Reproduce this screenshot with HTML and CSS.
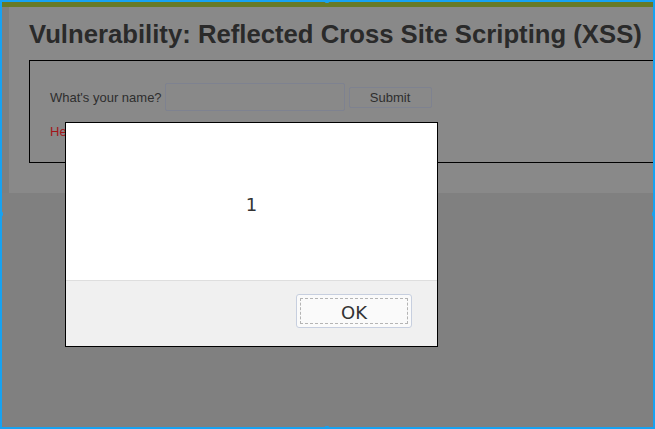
FILE: index.html
```html
<!DOCTYPE html>
<html>
<head>
<meta charset="utf-8">
<link rel="stylesheet" href="styles.css">
</head>
<body>
<div class="frame">
  <div class="topbar"></div>
  <div class="row">
    <div class="strip"></div>
    <div class="panel">
      <h1 class="title">Vulnerability: Reflected Cross Site Scripting (XSS)</h1>
      <div class="box">
        <form class="form">
          <span class="label">What's your name?</span>
          <span class="input"></span>
          <span class="submit">Submit</span>
        </form>
        <div class="hello">Hello</div>
      </div>
    </div>
  </div>
  <div class="dialog">
    <div class="dialog-body">1</div>
    <div class="dialog-foot">
      <div class="ok"><span class="ok-inner">OK</span></div>
    </div>
  </div>
  <span class="handle h-top"></span>
  <span class="handle h-left"></span>
  <span class="handle h-right"></span>
  <span class="handle h-bottom"></span>
</div>
</body>
</html>
```

FILE: styles.css
```css
html, body {
  margin: 0;
  padding: 0;
}
body {
  width: 655px;
  height: 429px;
  overflow: hidden;
  background: #808080;
}
.frame {
  position: relative;
  width: 655px;
  height: 429px;
  box-sizing: border-box;
  border: 2px solid #17a2f2;
  background: #808080;
  overflow: hidden;
}
.topbar {
  height: 5px;
  background: #687a26;
}
.row {
  display: flex;
}
.strip {
  width: 7px;
  background: #7f7f7f;
}
.panel {
  flex: 1;
  height: 186px;
  background: #898989;
  padding-left: 20px;
  overflow: hidden;
}
.title {
  margin: 12px 0 0 0;
  font-family: "Liberation Sans", Arial, sans-serif;
  font-weight: bold;
  font-size: 25.7px;
  line-height: 30px;
  color: #2a2a2a;
  white-space: nowrap;
}
.box {
  margin-top: 11px;
  border: 1px solid #000;
  border-right: none;
  height: 101px;
  box-sizing: content-box;
  padding: 0 0 0 20px;
  font-family: "Liberation Sans", Arial, sans-serif;
  font-size: 13px;
}
.form {
  display: flex;
  align-items: center;
  margin: 22px 0 0 0;
}
.label {
  color: #2e2e2e;
  margin-right: 3px;
}
.input {
  width: 178px;
  height: 26px;
  border: 1px solid #7e8290;
  border-radius: 2px;
  margin-right: 4px;
}
.submit {
  width: 81px;
  height: 19px;
  border: 1px solid #7e8290;
  border-radius: 2px;
  display: flex;
  align-items: center;
  justify-content: center;
  color: #2e2e2e;
}
.hello {
  margin-top: 13px;
  color: #a2161b;
  line-height: 15px;
}
.dialog {
  position: absolute;
  left: 63px;
  top: 120px;
  width: 371px;
  height: 223px;
  border: 1px solid #000;
  display: flex;
  flex-direction: column;
  font-family: "DejaVu Sans", sans-serif;
}
.dialog-body {
  height: 158px;
  background: #fff;
  border-bottom: 1px solid #dedede;
  display: flex;
  align-items: center;
  justify-content: center;
  font-size: 18px;
  color: #333;
  padding-top: 5px;
  box-sizing: border-box;
}
.dialog-foot {
  flex: 1;
  background: #f0f0f0;
  display: flex;
  justify-content: flex-end;
  align-items: flex-start;
  padding: 13px 25px 0 0;
}
.ok {
  border: 1px solid #c7cfdf;
  border-radius: 3px;
  background: #fafafa;
  padding: 3px;
  box-sizing: content-box;
  width: 108px;
  height: 26px;
}
.ok-inner {
  display: flex;
  align-items: center;
  justify-content: center;
  height: 100%;
  box-sizing: border-box;
  border: 1px dashed #b4b4b4;
  font-size: 18px;
  color: #333;
  padding-top: 2px;
}
.handle {
  position: absolute;
  width: 6px;
  height: 6px;
  border-radius: 50%;
  background: #17a2f2;
}
.h-top { top: -5px; left: 322px; }
.h-bottom { bottom: -5px; left: 322px; }
.h-left { left: -5px; top: 209px; }
.h-right { right: -5px; top: 209px; }
```
